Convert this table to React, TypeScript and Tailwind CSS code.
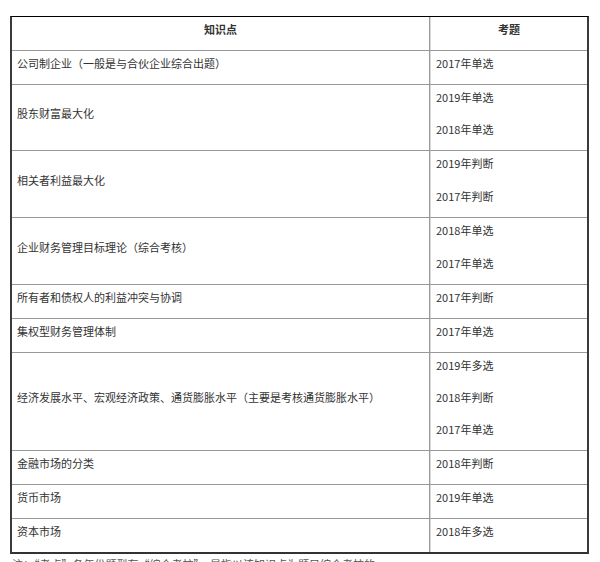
import React from "react";

const rows: { k: string; t: string[]; tight?: boolean }[] = [
  { k: "公司制企业（一般是与合伙企业综合出题）", t: ["2017年单选"] },
  { k: "股东财富最大化", t: ["2019年单选", "2018年单选"], tight: true },
  { k: "相关者利益最大化", t: ["2019年判断", "2017年判断"] },
  { k: "企业财务管理目标理论（综合考核）", t: ["2018年单选", "2017年单选"] },
  { k: "所有者和债权人的利益冲突与协调", t: ["2017年判断"] },
  { k: "集权型财务管理体制", t: ["2017年单选"] },
  {
    k: "经济发展水平、宏观经济政策、通货膨胀水平（主要是考核通货膨胀水平）",
    t: ["2019年多选", "2018年判断", "2017年单选"],
    tight: true,
  },
  { k: "金融市场的分类", t: ["2018年判断"] },
  { k: "货币市场", t: ["2019年单选"] },
  { k: "资本市场", t: ["2018年多选"] },
];

export default function App() {
  return (
    <div
      className="w-[600px] h-[562px] overflow-hidden bg-white text-[11px] leading-[18px] text-[#333]"
      style={{ fontFamily: '"Noto Sans CJK SC", "Noto Sans", sans-serif' }}
    >
      <div className="ml-[10px] mt-[16px] w-[579px] border-t border-t-black border-l-2 border-l-[#3a3a3a] border-r-2 border-r-[#3a3a3a] border-b-2 border-b-[#333]">
        <div className="flex">
          <div className="w-[418px] border-r border-r-[#9a9a9a] pt-[3px] pb-[12px] text-center font-bold">
            知识点
          </div>
          <div className="flex-1 border-l border-l-[#d8d8d8] pt-[3px] pb-[12px] text-center font-bold">
            考题
          </div>
        </div>
        {rows.map((r, i) => (
          <div key={i} className="flex border-t border-t-[#999]">
            <div className="w-[418px] border-r border-r-[#9a9a9a] pt-[3px] pb-[12px] pl-[5px] flex items-center">
              <span>{r.k}</span>
            </div>
            <div
              className={
                r.tight
                  ? "flex-1 border-l border-l-[#d8d8d8] pt-[3px] pb-[12px] pl-[5px] flex flex-col gap-[14px]"
                  : "flex-1 border-l border-l-[#d8d8d8] pt-[3px] pb-[12px] pl-[5px] flex flex-col gap-[15px]"
              }
            >
              {r.t.map((x, j) => (
                <div key={j}>{x}</div>
              ))}
            </div>
          </div>
        ))}
      </div>
      <p className="ml-[12px] mt-[1px] text-[#555]">
        注：“考点”各年份题型有“综合考核”，是指以该知识点为题目综合考核的。
      </p>
    </div>
  );
}
